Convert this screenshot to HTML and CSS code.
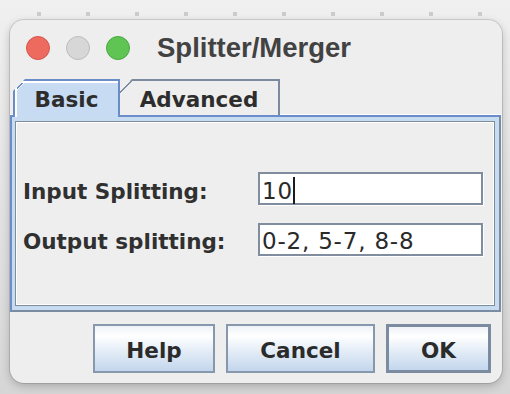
FILE: index.html
```html
<!DOCTYPE html>
<html lang="en">
<head>
    <meta charset="UTF-8">
    <meta name="viewport" content="width=device-width, initial-scale=1.0">
    <title>Splitter/Merger</title>
    <link rel="stylesheet" href="styles.css">
</head>
<body>
    <div class="dots">
        <span></span><span></span><span></span><span></span><span></span>
        <span></span><span></span><span></span><span></span><span></span>
    </div>

    <div class="window">
        <div class="titlebar">
            <span class="light red"></span>
            <span class="light min"></span>
            <span class="light green"></span>
            <span class="title">Splitter/Merger</span>
        </div>

        <div class="tabs">
            <div class="tab active">Basic</div>
            <div class="tab">Advanced</div>
        </div>

        <div class="panel">
            <div class="inner">
                <div class="form">
                    <label>Input Splitting:</label>
                    <div class="field">10<span class="caret"></span></div>
                    <label>Output splitting:</label>
                    <div class="field">0-2, 5-7, 8-8</div>
                </div>
            </div>
        </div>

        <div class="buttons">
            <button class="btn help">Help</button>
            <button class="btn cancel">Cancel</button>
            <button class="btn ok">OK</button>
        </div>
    </div>
</body>
</html>
```

FILE: styles.css
```css
body {
    margin: 0;
    width: 510px;
    height: 394px;
    overflow: hidden;
    background: linear-gradient(#f0f0f0, #d6d6d6);
    font-family: "DejaVu Sans", sans-serif;
}

.dots {
    display: flex;
    gap: 45px;
    height: 16px;
    padding: 12px 0 0 37px;
    box-sizing: border-box;
}

.dots span {
    width: 4px;
    height: 4px;
    background-color: #cbcbcb;
}

.window {
    margin: 4px 0 0 10px;
    width: 492px;
    height: 363px;
    background-color: #eeeeee;
    border-radius: 14px;
    box-shadow: 0 0 0 1px rgba(0, 0, 0, 0.12), 0 3px 10px rgba(0, 0, 0, 0.22);
}

/* title bar */
.titlebar {
    display: flex;
    align-items: center;
    gap: 16px;
    height: 56px;
    padding-left: 16px;
}

.light {
    width: 24px;
    height: 24px;
    border-radius: 50%;
    box-sizing: border-box;
    border: 1px solid;
}

.red {
    background-color: #ed6a5e;
    border-color: #d5574c;
}

.min {
    background-color: #d7d7d7;
    border-color: #bdbdbd;
}

.green {
    background-color: #5fc454;
    border-color: #4ca842;
}

.title {
    margin-left: 11px;
    font-family: "Liberation Sans", Arial, sans-serif;
    font-weight: bold;
    font-size: 27.5px;
    color: #424242;
}

/* tabs */
.tabs {
    display: flex;
    align-items: flex-start;
    height: 39px;
    padding: 3px 0 0 3px;
    box-sizing: border-box;
}

.tab {
    position: relative;
    z-index: 1;
    height: 36px;
    width: 160px;
    box-sizing: border-box;
    padding-top: 6px;
    line-height: 25px;
    text-align: center;
    font-size: 21.5px;
    font-weight: bold;
    color: #2d2d2d;
    border: 2px solid #7b8a9e;
    border-left: 0;
    border-bottom: 0;
    background: linear-gradient(135deg, transparent 8.5px, #7b8a9e 8.5px, #7b8a9e 10px, #eeeeee 10px);
    background-origin: border-box;
    clip-path: polygon(12px 0, 100% 0, 100% 100%, 0 100%, 0 12px);
}

.tab.active {
    width: 107px;
    height: 38px;
    margin-bottom: -2px;
    border-left: 2px solid #6a8cc8;
    border-color: #6a8cc8;
    background: linear-gradient(135deg, transparent 8.5px, #6a8cc8 8.5px, #6a8cc8 10px, #ffffff 10px, #ffffff 11px, #c7dcf2 11px);
    background-origin: border-box;
    box-shadow: inset 2px 2px 0 #ffffff;
}

/* content panel */
.panel {
    display: flex;
    height: 197px;
    margin-right: 1px;
    box-sizing: border-box;
    border: 2px solid;
    border-color: #6b8dcc #7b8ca2 #7b8ca2 #6b8dcc;
    background-color: #c7dbf1;
    padding: 4px 4px 4px 3px;
    box-shadow: 0 -1px 0 #ffffff;
}

.inner {
    flex: 1;
    display: flex;
    align-items: center;
    padding: 0 10px 0 7px;
    background-color: #eeeeee;
    border: 1px solid #7f8c9a;
    box-shadow: inset 0 0 0 1px #ffffff;
}

.form {
    display: grid;
    grid-template-columns: 235px 225px;
    row-gap: 18px;
    align-items: baseline;
}

label {
    font-size: 21.5px;
    font-weight: bold;
    color: #303030;
}

.field {
    height: 33px;
    box-sizing: border-box;
    padding: 3px 4px 1px 2px;
    line-height: 27px;
    font-size: 23px;
    letter-spacing: 0.8px;
    color: #2a2a2a;
    background-color: #ffffff;
    border: 2px solid #7f8d9e;
    box-shadow: 1px 1px 0 #ffffff;
    white-space: nowrap;
}

.caret {
    display: inline-block;
    width: 2px;
    height: 27px;
    vertical-align: text-bottom;
    background-color: #1c1c1c;
}

/* buttons */
.buttons {
    display: flex;
    justify-content: flex-end;
    gap: 11px;
    padding: 12px 11px 0 0;
}

.btn {
    height: 49px;
    padding: 4px 0 0;
    font-family: "DejaVu Sans", sans-serif;
    font-size: 21.5px;
    font-weight: bold;
    color: #2b2b2b;
    border: 2px solid #8798ad;
    border-radius: 0;
    background: linear-gradient(#eef2f7 0%, #ffffff 22%, #e4edf7 55%, #c3d6ec 100%);
}

.help {
    width: 122px;
}

.cancel {
    width: 149px;
}

.ok {
    width: 105px;
    border: 3px solid #7b8ca1;
}
```
